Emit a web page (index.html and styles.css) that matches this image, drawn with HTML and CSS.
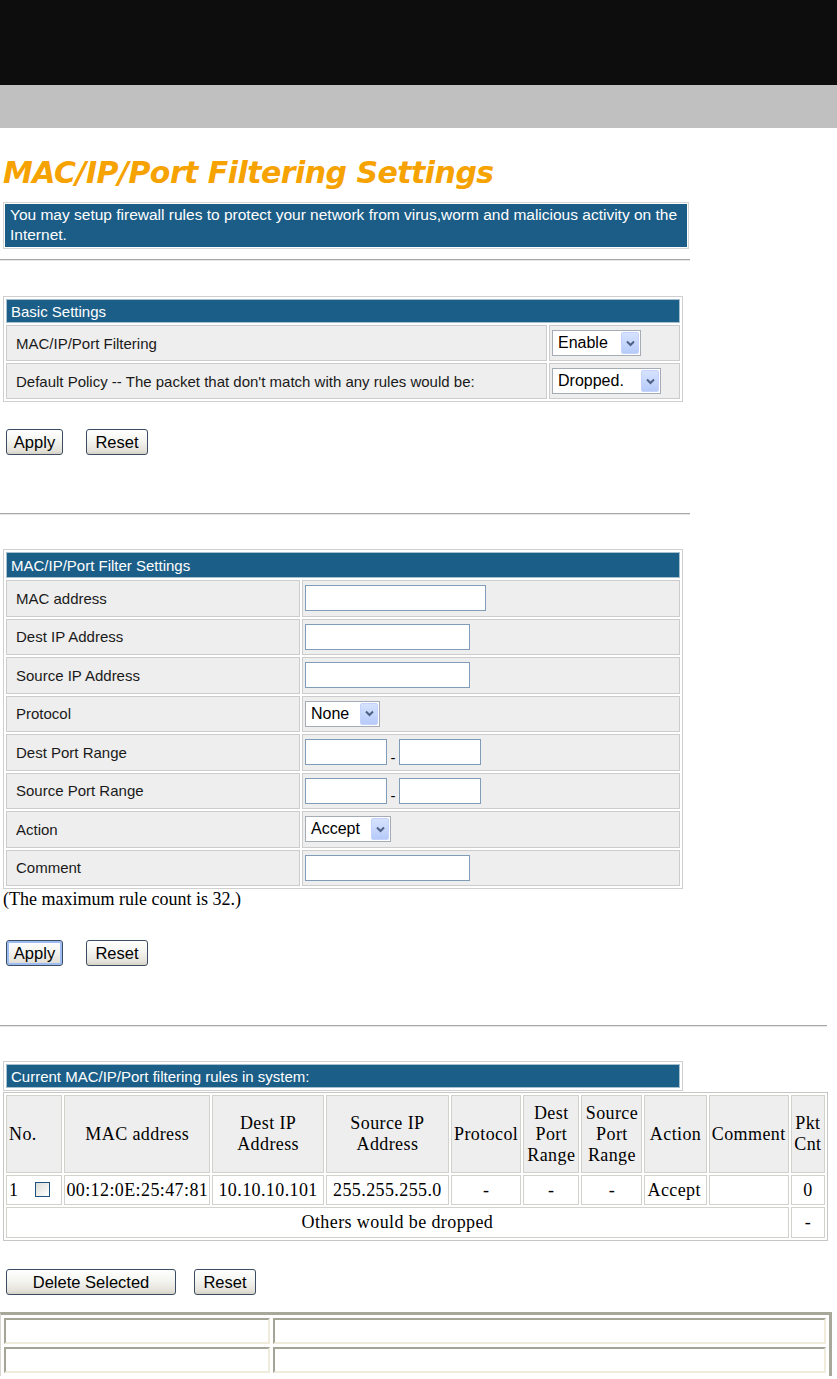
FILE: index.html
```html
<!DOCTYPE html>
<html>
<head>
<meta charset="utf-8">
<title>MAC/IP/Port Filtering Settings</title>
<link rel="stylesheet" href="styles.css">
</head>
<body>
<div class="topbar"></div>
<div class="subbar"></div>
<div class="content">
  <h1 class="title">MAC/IP/Port Filtering Settings</h1>
  <div class="intro"><div class="intro-inner">You may setup firewall rules to protect your network from virus,worm and malicious activity on the Internet.</div></div>
  <div class="rule rule-short"></div>

  <table class="form basic">
    <tr><td colspan="2" class="head">Basic Settings</td></tr>
    <tr>
      <td class="label">MAC/IP/Port Filtering</td>
      <td class="field"><span class="select sel-enable"><span class="sel-text">Enable</span><span class="arrow"><svg width="9" height="7" viewBox="0 0 9 7"><path d="M1 1.5 L4.5 5 L8 1.5" fill="none" stroke="#4d6185" stroke-width="2"/></svg></span></span></td>
    </tr>
    <tr>
      <td class="label">Default Policy -- The packet that don't match with any rules would be:</td>
      <td class="field"><span class="select sel-dropped"><span class="sel-text">Dropped.</span><span class="arrow"><svg width="9" height="7" viewBox="0 0 9 7"><path d="M1 1.5 L4.5 5 L8 1.5" fill="none" stroke="#4d6185" stroke-width="2"/></svg></span></span></td>
    </tr>
  </table>

  <div class="buttons">
    <button class="btn btn-apply">Apply</button>
    <button class="btn btn-reset">Reset</button>
  </div>

  <div class="rule rule-short rule-2"></div>

  <table class="form filter">
    <tr><td colspan="2" class="head">MAC/IP/Port Filter Settings</td></tr>
    <tr><td class="label">MAC address</td><td class="field"><input class="inp inp-mac" type="text"></td></tr>
    <tr><td class="label">Dest IP Address</td><td class="field"><input class="inp inp-ip" type="text"></td></tr>
    <tr><td class="label">Source IP Address</td><td class="field"><input class="inp inp-ip" type="text"></td></tr>
    <tr><td class="label">Protocol</td><td class="field"><span class="select sel-none"><span class="sel-text">None</span><span class="arrow"><svg width="9" height="7" viewBox="0 0 9 7"><path d="M1 1.5 L4.5 5 L8 1.5" fill="none" stroke="#4d6185" stroke-width="2"/></svg></span></span></td></tr>
    <tr><td class="label">Dest Port Range</td><td class="field"><input class="inp inp-port" type="text"><span class="dash">-</span><input class="inp inp-port" type="text"></td></tr>
    <tr><td class="label">Source Port Range</td><td class="field"><input class="inp inp-port" type="text"><span class="dash">-</span><input class="inp inp-port" type="text"></td></tr>
    <tr><td class="label">Action</td><td class="field"><span class="select sel-accept"><span class="sel-text">Accept</span><span class="arrow"><svg width="9" height="7" viewBox="0 0 9 7"><path d="M1 1.5 L4.5 5 L8 1.5" fill="none" stroke="#4d6185" stroke-width="2"/></svg></span></span></td></tr>
    <tr><td class="label">Comment</td><td class="field"><input class="inp inp-ip" type="text"></td></tr>
  </table>
  <div class="note">(The maximum rule count is 32.)</div>

  <div class="buttons buttons-2">
    <button class="btn btn-apply btn-focus">Apply</button>
    <button class="btn btn-reset">Reset</button>
  </div>

  <div class="rule rule-long"></div>

  <table class="form rules-head">
    <tr><td class="head">Current MAC/IP/Port filtering rules in system:</td></tr>
  </table>

  <table class="rules">
    <tr class="rules-th">
      <td class="c-no left">No.</td>
      <td class="c-mac">MAC address</td>
      <td class="c-dip">Dest IP<br>Address</td>
      <td class="c-sip">Source IP<br>Address</td>
      <td class="c-proto">Protocol</td>
      <td class="c-dport">Dest<br>Port<br>Range</td>
      <td class="c-sport">Source<br>Port<br>Range</td>
      <td class="c-act">Action</td>
      <td class="c-com">Comment</td>
      <td class="c-pkt">Pkt<br>Cnt</td>
    </tr>
    <tr class="rules-row">
      <td class="left">1<span class="check"></span></td>
      <td>00:12:0E:25:47:81</td>
      <td>10.10.10.101</td>
      <td>255.255.255.0</td>
      <td>-</td>
      <td>-</td>
      <td>-</td>
      <td class="left">Accept</td>
      <td></td>
      <td>0</td>
    </tr>
    <tr class="rules-row rules-last">
      <td colspan="9">Others would be dropped</td>
      <td>-</td>
    </tr>
  </table>

  <div class="buttons buttons-3">
    <button class="btn btn-delete">Delete Selected</button>
    <button class="btn btn-reset">Reset</button>
  </div>
</div>

<table class="footer">
  <tr><td class="f1"></td><td class="f2"></td></tr>
  <tr><td class="f1"></td><td class="f2"></td></tr>
</table>
</body>
</html>
```

FILE: styles.css
```css
html, body {
  margin: 0;
  padding: 0;
  background: #ffffff;
}
body {
  font-family: "Liberation Sans", Arial, sans-serif;
  font-size: 15px;
  color: #000;
}
.topbar {
  height: 85px;
  background: #0d0d0d;
}
.subbar {
  height: 43px;
  background: #c0c0c0;
}
.content {
  padding: 0 0 0 3px;
}
.title {
  margin: 28px 0 0 0;
  font-family: "DejaVu Sans", Verdana, sans-serif;
  font-style: italic;
  font-weight: bold;
  font-size: 30px;
  line-height: 34px;
  color: #f6a200;
  letter-spacing: -0.55px;
}
.intro {
  width: 686px;
  box-sizing: border-box;
  margin-top: 12px;
  border: 1px solid #d4d4d4;
  padding: 1px;
}
.intro-inner {
  background: #1b5d87;
  color: #ffffff;
  font-size: 15.5px;
  line-height: 20px;
  padding: 1px 4px 2px 5px;
}
.rule {
  margin-left: -3px;
  height: 0;
  border-top: 1px solid #a9a9a9;
  border-bottom: 1px solid #e6e6e6;
}
.rule-short {
  width: 690px;
  margin-top: 10px;
}
.rule-2 {
  margin-top: 58px;
}
.rule-long {
  width: 827px;
  margin-top: 59px;
}

/* Form tables */
.form {
  border-collapse: separate;
  border-spacing: 2px;
  border: 1px solid #cfcfcf;
  width: 680px;
}
.form td {
  border: 1px solid #cccccc;
  padding: 0;
}
.form td.head {
  background: #1b5e88;
  color: #ffffff;
  height: 22px;
  padding-left: 4px;
  border-color: #a7c0d0;
}
.form td.label {
  background: #eeeeee;
  padding-left: 9px;
  color: #1a1a1a;
}
.form td.field {
  background: #eeeeee;
  padding-left: 2px;
}
.basic {
  margin-top: 35px;
}
.basic td.label, .basic td.field {
  height: 34px;
}
.basic td.field {
  width: 127px;
}
.filter {
  margin-top: 34px;
}
.filter td.head {
  height: 24px;
}
.filter td.label {
  width: 283px;
  height: 34.5px;
}

/* Selects */
.select {
  display: inline-flex;
  align-items: center;
  justify-content: space-between;
  box-sizing: border-box;
  height: 26px;
  background: #ffffff;
  border: 1px solid #a5acb5;
  padding: 1px 1px 1px 5px;
  vertical-align: middle;
  font-size: 16px;
}
.sel-text {
  line-height: 20px;
}
.arrow {
  display: inline-flex;
  align-items: center;
  justify-content: center;
  width: 18px;
  height: 22px;
  box-sizing: border-box;
  border: 1px solid #c3d3fd;
  border-radius: 2px;
  background: linear-gradient(#d6e2fe, #b7cbfa);
}
.sel-enable { width: 89px; }
.sel-dropped { width: 109px; }
.sel-none { width: 75px; }
.sel-accept { width: 86px; }

/* Inputs */
.inp {
  box-sizing: border-box;
  height: 26px;
  border: 1px solid #7f9db9;
  background: #ffffff;
  margin: 0;
  padding: 0;
  vertical-align: middle;
}
.inp-mac { width: 181px; }
.inp-ip { width: 165px; }
.inp-port { width: 82px; }
.dash {
  display: inline-block;
  width: 12px;
  text-align: center;
  vertical-align: middle;
  position: relative;
  top: 5px;
}

/* Buttons */
.buttons {
  margin-top: 27px;
  display: flex;
  gap: 23px;
  padding-left: 3px;
}
.btn {
  font-family: "Liberation Sans", Arial, sans-serif;
  font-size: 16.5px;
  height: 26px;
  padding: 0;
  border: 1px solid #3c4d63;
  border-radius: 3px;
  background: linear-gradient(#ffffff 0%, #f4f4f0 45%, #e4e2da 85%, #d6d2c6 100%);
  color: #000;
}
.btn-apply { width: 57px; }
.btn-reset { width: 62px; }
.btn-delete { width: 170px; }
.btn-focus {
  box-shadow: inset 0 0 0 2px #9dbcf2;
}
.buttons-2 {
  margin-top: 30px;
}
.buttons-3 {
  margin-top: 28px;
  gap: 18px;
}
.note {
  font-family: "Liberation Serif", "Times New Roman", serif;
  font-size: 18px;
  line-height: 21px;
  margin-top: 0;
}

/* Rules */
.rules-head {
  margin-top: 34px;
}
.rules-head td.head {
  height: 22px;
}
.rules {
  border-collapse: separate;
  border-spacing: 2px;
  border: 1px solid #c6c6c6;
  width: 825px;
  font-family: "Liberation Serif", "Times New Roman", serif;
  font-size: 18px;
  letter-spacing: 0.4px;
  margin-top: 1px;
}
.rules td {
  border: 1px solid #d2d2cc;
  text-align: center;
  padding: 0;
  line-height: 21px;
  white-space: nowrap;
}
.rules td.left {
  text-align: left;
  padding-left: 2px;
}
.rules-th td {
  height: 76px;
  background: #eeeeee;
}
.rules-row td {
  height: 28px;
}
.rules-last td {
  height: 29px;
}
.c-no { width: 52px; }
.c-mac { width: 144px; }
.c-dip { width: 109px; }
.c-sip { width: 121px; }
.c-proto { width: 68px; }
.c-dport { width: 54px; }
.c-sport { width: 59px; }
.c-act { width: 60px; }
.c-com { width: 78px; }
.c-pkt { width: 32px; }
.check {
  display: inline-block;
  width: 13px;
  height: 13px;
  border: 1px solid #1c5180;
  background: linear-gradient(135deg, #dcdcd7, #ffffff);
  vertical-align: -1px;
  margin-left: 17px;
}

/* Footer table */
.footer {
  margin-top: 17px;
  width: 832px;
  border-collapse: separate;
  border-spacing: 3px;
  border-top: 3px solid #a8a89a;
  border-left: 1px solid #d8d8d0;
  border-right: 3px solid #a8a89a;
}
.footer td {
  height: 22px;
  border-top: 2px solid #a5a597;
  border-left: 2px solid #a5a597;
  border-bottom: 2px solid #f0ecdc;
  border-right: 2px solid #f0ecdc;
  padding: 0;
}
.footer td.f1 {
  width: 262px;
}
```
